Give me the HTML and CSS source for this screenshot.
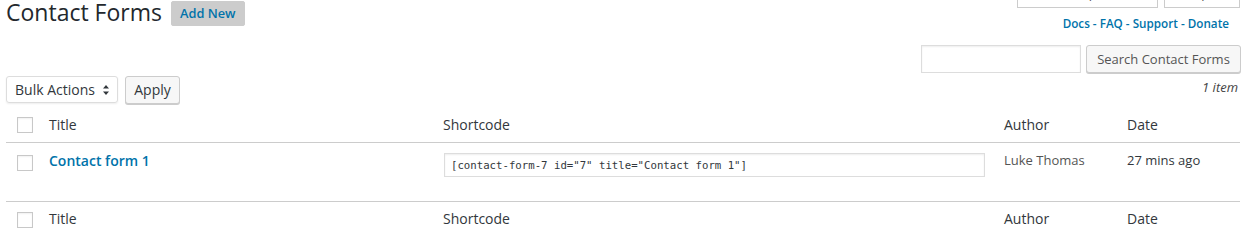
FILE: index.html
```html
<!DOCTYPE html>
<html lang="en">
<head>
<meta charset="utf-8">
<title>Contact Forms</title>
<link rel="stylesheet" href="styles.css">
</head>
<body>
<div class="wrap">
  <header class="top">
    <div class="title-group">
      <h1 class="page-title">Contact Forms</h1>
      <a class="add-new" href="#">Add New</a>
    </div>
    <div class="meta">
      <div class="tabs">
        <div class="tab tab-screen"><span>Screen Options</span></div>
        <div class="tab tab-help"><span>Help</span></div>
      </div>
      <div class="links"><a href="#">Docs</a> - <a href="#">FAQ</a> - <a href="#">Support</a> - <a href="#">Donate</a></div>
    </div>
  </header>

  <div class="search-row">
    <input class="search-input" type="search" aria-label="Search">
    <button class="btn search-btn" type="button">Search Contact Forms</button>
  </div>

  <div class="tablenav">
    <div class="actions">
      <div class="select">
        <span>Bulk Actions</span>
        <svg class="arrows" width="6" height="10" viewBox="0 0 6 10"><path d="M3 0 L6 3.6 L0 3.6 Z M3 10 L6 6.4 L0 6.4 Z" fill="#32373c"/></svg>
      </div>
      <button class="btn apply-btn" type="button">Apply</button>
    </div>
    <div class="count">1 item</div>
  </div>

  <table class="list">
    <colgroup>
      <col class="c-check"><col class="c-title"><col class="c-short"><col class="c-author"><col class="c-date">
    </colgroup>
    <thead>
      <tr>
        <th class="check"><input type="checkbox" class="cb"></th>
        <th>Title</th>
        <th>Shortcode</th>
        <th>Author</th>
        <th>Date</th>
      </tr>
    </thead>
    <tbody>
      <tr class="row">
        <td class="check"><input type="checkbox" class="cb"></td>
        <td class="title-cell"><a href="#">Contact form 1</a></td>
        <td class="short-cell"><input class="shortcode" type="text" readonly value="[contact-form-7 id=&quot;7&quot; title=&quot;Contact form 1&quot;]"></td>
        <td class="author-cell">Luke Thomas</td>
        <td class="date-cell">27 mins ago</td>
      </tr>
    </tbody>
    <tfoot>
      <tr>
        <th class="check"><input type="checkbox" class="cb"></th>
        <th>Title</th>
        <th>Shortcode</th>
        <th>Author</th>
        <th>Date</th>
      </tr>
    </tfoot>
  </table>
</div>
</body>
</html>
```

FILE: styles.css
```css
html, body {
  margin: 0;
  padding: 0;
  background: #fff;
}
body {
  font-family: "Open Sans", "Liberation Sans", sans-serif;
  color: #32373c;
  font-size: 13px;
}
.wrap {
  padding: 0 5px 0 6px;
}
a { color: #0073aa; text-decoration: none; }

.top {
  display: flex;
  justify-content: space-between;
  align-items: flex-start;
  height: 32px;
}
.title-group {
  display: flex;
  align-items: flex-start;
}
.page-title {
  margin: -3px 0 0 0;
  font-size: 23px;
  line-height: 30px;
  font-weight: 400;
  color: #23282d;
}
.add-new {
  margin: 1px 0 0 9px;
  padding: 4px 8px;
  font-size: 12.8px;
  line-height: 15px;
  font-weight: 600;
  background: #ccc;
  border: 1px solid #ccc;
  border-radius: 2px;
  color: #0073aa;
}
.meta {
  display: flex;
  flex-direction: column;
  align-items: flex-end;
}
.tabs {
  display: flex;
  gap: 6px;
}
.tab {
  height: 7px;
  border: 1px solid #ccc;
  border-top: 0;
  background: #fff;
  overflow: hidden;
  box-sizing: content-box;
}
.tab span {
  display: block;
  margin-top: -16px;
  font-size: 13px;
  line-height: 18px;
  color: #555;
  padding: 0 16px;
}
.tab-screen { width: 139px; }
.tab-help { width: 74px; }
.links {
  margin: 6px 11px 0 0;
  font-size: 11.7px;
  line-height: 18px;
  font-weight: 600;
  color: #0073aa;
}

.search-row {
  display: flex;
  justify-content: flex-end;
  gap: 5px;
  margin-top: 13px;
  margin-right: -1px;
}
.search-input {
  width: 160px;
  height: 28px;
  box-sizing: border-box;
  margin: 0;
  border: 1px solid #ddd;
  box-shadow: inset 0 1px 2px rgba(0,0,0,.07);
  border-radius: 0;
  outline: none;
}
.btn {
  font-family: "Open Sans", "Liberation Sans", sans-serif;
  height: 28px;
  box-sizing: border-box;
  margin: 0;
  padding: 0 10px 1px;
  font-size: 13px;
  line-height: 26px;
  color: #555;
  background: #f7f7f7;
  border: 1px solid #ccc;
  border-radius: 3px;
  box-shadow: 0 1px 0 #ccc;
}
.search-btn { width: 155px; padding: 0; }

.tablenav {
  display: flex;
  justify-content: space-between;
  align-items: flex-start;
  margin-top: 3px;
  height: 28px;
}
.actions {
  display: flex;
  gap: 7px;
}
.select {
  display: flex;
  align-items: center;
  justify-content: space-between;
  width: 112px;
  height: 27px;
  box-sizing: border-box;
  padding: 0 8px 1px 8px;
  border: 1px solid #ddd;
  border-radius: 3px;
  box-shadow: 0 1px 2px rgba(0,0,0,.07);
  font-size: 14px;
  color: #32373c;
}
.arrows { display: block; margin-top: 1px; }
.apply-btn {
  width: 55px;
  padding: 0;
  font-size: 14px;
  color: #32373c;
}
.count {
  margin: 2px 2px 0 0;
  font-size: 13px;
  line-height: 18px;
  font-style: italic;
  color: #444;
}

.list {
  margin-top: 3px;
  width: 100%;
  table-layout: fixed;
  border-collapse: separate;
  border-spacing: 0;
}
.c-check { width: 33px; }
.c-title { width: 394px; }
.c-short { width: 561px; }
.c-author { width: 123px; }
.c-date { width: 123px; }

.list th, .list td {
  text-align: left;
  vertical-align: top;
  padding: 8px 10px 7px;
  font-size: 14px;
  line-height: 20px;
  font-weight: 400;
  color: #32373c;
}
.list thead th { border-bottom: 1px solid #ccc; }
.list tfoot th {
  border-top: 1px solid #ccc;
  padding-top: 7px;
}
.list .check { padding: 10px 0 0 11px; }
.list tbody .check { padding-top: 12px; }
.list tfoot .check { padding-top: 10px; }

.cb {
  -webkit-appearance: none;
  appearance: none;
  display: block;
  width: 16px;
  height: 16px;
  margin: 0;
  box-sizing: border-box;
  border: 1px solid #c8c8c8;
  background: #fff;
  box-shadow: inset 0 1px 2px rgba(0,0,0,.06);
}

.row { height: 58px; }
.title-cell a {
  font-weight: 600;
  font-size: 14px;
  color: #0073aa;
}
.short-cell { padding-top: 10px !important; }
.shortcode {
  display: block;
  width: 541px;
  height: 24px;
  box-sizing: border-box;
  margin: 0 0 0 1px;
  padding: 0 6px;
  border: 1px solid #ddd;
  box-shadow: inset 0 1px 2px rgba(0,0,0,.07);
  font-family: "DejaVu Sans Mono", "Liberation Mono", monospace;
  font-size: 10.7px;
  color: #32373c;
  background: #fff;
  outline: none;
}
.list td.author-cell, .list td.date-cell {
  font-size: 13px;
  padding-top: 7px;
}
.list td.author-cell { color: #555; }
```
